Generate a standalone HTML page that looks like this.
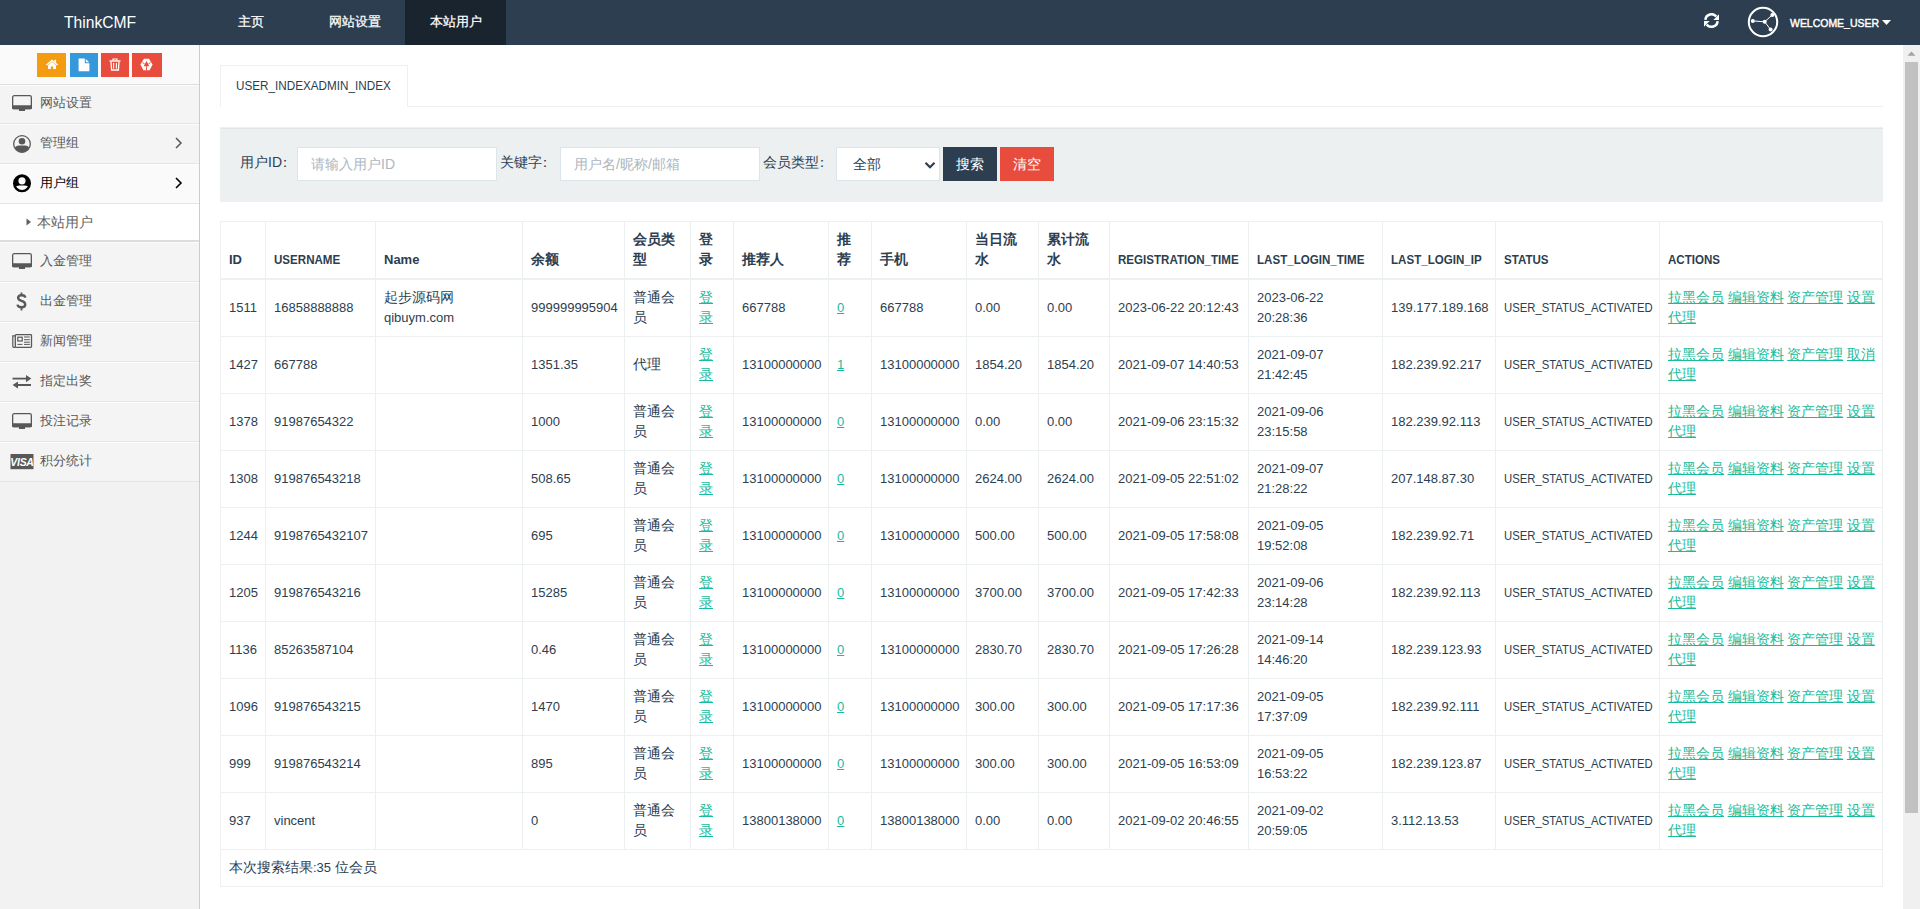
<!DOCTYPE html>
<html><head><meta charset="utf-8"><title>ThinkCMF</title>
<style>
html,body{margin:0;padding:0;width:1920px;height:909px;overflow:hidden;background:#fff;font-family:"Liberation Sans",sans-serif;}
*{box-sizing:border-box;}
.abs{position:absolute;}
svg.abs{z-index:5;}
#hdr{position:absolute;left:0;top:0;width:1920px;height:45px;background:#2c3e50;color:#fff;}
#brand{position:absolute;left:64px;top:14px;font-size:17px;line-height:18px;white-space:nowrap;}
.nv{position:absolute;top:-1px;height:46px;line-height:45px;font-size:13px;color:#fff;text-align:center;-webkit-text-stroke:0.25px #fff;}
.nv.on{background:#1a242f;}
#side{position:absolute;left:0;top:45px;width:200px;height:864px;background:#f2f2f2;border-right:1px solid #ccc;}
#sc{position:absolute;left:0;top:0;width:199px;height:40px;background:#fafafa;border-bottom:1px solid #ddd;}
.sb{position:absolute;top:8px;height:24px;}
.mi{position:absolute;left:0;width:199px;background:#f4f4f4;border-top:1px solid #fcfcfc;border-bottom:1px solid #e5e5e5;color:#585858;font-size:13px;}
.mi .t{position:absolute;left:40px;top:10px;line-height:16px;white-space:nowrap;}
.mi svg{position:absolute;}
#content{position:absolute;left:200px;top:45px;width:1703px;height:864px;background:#fff;}
#sbar{position:absolute;left:1903px;top:45px;width:17px;height:864px;background:#f0f0f0;}
#thumb{position:absolute;left:2px;top:17px;width:13px;height:751px;background:#c1c1c1;}
.cp{display:inline-block;transform-origin:0 50%;white-space:nowrap;}
#tab{position:absolute;left:20px;top:20px;width:188px;height:42px;border:1px solid #ecf0f1;border-bottom:none;background:#fff;font-size:13px;color:#2c3e50;}
#tabline{position:absolute;left:207px;top:61px;width:1476px;height:1px;background:#ecf0f1;}
#well{position:absolute;left:20px;top:82px;width:1663px;height:75px;background:#ecf0f1;}
#wellsh{position:absolute;left:1px;top:1px;right:0;height:1px;background:#e0e5e7;}
.lbl{position:absolute;top:26px;font-size:14px;line-height:18px;color:#2c3e50;white-space:nowrap;}
.inp{position:absolute;top:20px;height:34px;background:#fff;border:1px solid #dce4ec;font-size:14px;color:#acb6c0;line-height:32px;padding-left:13px;white-space:nowrap;}
.btn{position:absolute;top:20px;height:34px;width:54px;color:#fff;font-size:14px;line-height:34px;text-align:center;}
#tbl{position:absolute;left:20px;top:176px;border-collapse:separate;border-spacing:0;table-layout:fixed;width:1663px;border-left:1px solid #ecf0f1;border-top:1px solid #ecf0f1;color:#2c3e50;font-size:13px;}
#tbl th,#tbl td{border-right:1px solid #ecf0f1;border-bottom:1px solid #ecf0f1;padding:8px 8px;line-height:20px;text-align:left;vertical-align:middle;white-space:nowrap;overflow:hidden;}
#tbl th{vertical-align:bottom;font-weight:bold;border-bottom:2px solid #ecf0f1;height:56px;}
#tbl td{height:55px;}
#tbl td.ft{height:35px;}
#tbl .z{font-size:14px;line-height:16px;}
#tbl a{color:#18bc9c;text-decoration:underline;}
</style></head><body>
<div id="hdr">
  <div id="brand"><span class="cp" style="transform:scaleX(0.92)">ThinkCMF</span></div>
  <div class="nv" style="left:213px;width:76px;">主页</div>
  <div class="nv" style="left:305px;width:100px;">网站设置</div>
  <div class="nv on" style="left:405px;width:101px;">本站用户</div>
  <svg class="abs" style="left:1704px;top:13px" width="15" height="15" viewBox="0 0 15 15"><path d="M1.4 6.9 A6.1 6.1 0 0 1 12.3 3.6" fill="none" stroke="#fff" stroke-width="2.5"/><path d="M15 1.3 V6.9 H9.4Z" fill="#fff"/><path d="M13.6 8.1 A6.1 6.1 0 0 1 2.7 11.4" fill="none" stroke="#fff" stroke-width="2.5"/><path d="M0 13.7 V8.1 H5.6Z" fill="#fff"/></svg>
  <svg class="abs" style="left:1747px;top:6px" width="32" height="32" viewBox="0 0 32 32"><circle cx="16" cy="16" r="14.2" fill="none" stroke="#fff" stroke-width="2"/><path d="M5.8 14.9 L17.7 15.8 L25.3 8.9 M17.7 15.8 L23.6 23.6" stroke="#fff" stroke-width="1" fill="none"/><circle cx="5.8" cy="14.9" r="2" fill="#fff"/><circle cx="17.7" cy="15.8" r="2" fill="#fff"/><circle cx="25.3" cy="8.9" r="2" fill="#fff"/><circle cx="23.6" cy="23.6" r="2" fill="#fff"/></svg>
  <div class="abs" style="left:1790px;top:16px;font-size:11.5px;line-height:14px;white-space:nowrap;color:#fff;-webkit-text-stroke:0.45px #fff"><span class="cp" style="transform:scaleX(0.91)">WELCOME_USER</span></div>
  <svg class="abs" style="left:1882px;top:20px" width="9" height="5" viewBox="0 0 9 5"><path d="M0 0 H9 L4.5 5 Z" fill="#fff"/></svg>
</div>

<div id="side">
  <div id="sc">
    <div class="sb" style="left:37px;width:29px;background:#f39c12;"></div>
    <div class="sb" style="left:70px;width:28px;background:#3498db;"></div>
    <div class="sb" style="left:101px;width:28px;background:#e74c3c;"></div>
    <div class="sb" style="left:132px;width:30px;background:#e74c3c;"></div>
  </div>
  <div class="mi" style="top:40px;height:39px;"><span class="t" style="top:9px">网站设置</span></div>
  <div class="mi" style="top:79px;height:40px;"><span class="t">管理组</span></div>
  <div class="mi" style="top:119px;height:40px;background:#fafafa;color:#000;"><span class="t">用户组</span></div>
  <div class="abs" style="left:0;top:159px;width:199px;height:36px;background:#fff;"><span class="abs" style="left:37px;top:10px;font-size:14px;line-height:16px;color:#616161">本站用户</span></div>
  <div class="abs" style="left:0;top:195px;width:199px;height:2px;background:#ddd;"></div>
  <div class="mi" style="top:197px;height:40px;"><span class="t">入金管理</span></div>
  <div class="mi" style="top:237px;height:40px;"><span class="t">出金管理</span></div>
  <div class="mi" style="top:277px;height:40px;"><span class="t">新闻管理</span></div>
  <div class="mi" style="top:317px;height:40px;"><span class="t">指定出奖</span></div>
  <div class="mi" style="top:357px;height:40px;"><span class="t">投注记录</span></div>
  <div class="mi" style="top:397px;height:40px;"><span class="t">积分统计</span></div>
</div>

<svg class="abs" style="left:12px;top:95px" width="20" height="17" viewBox="0 0 20 17"><rect x="0.65" y="0.65" width="18.7" height="13" rx="1.6" fill="none" stroke="#585858" stroke-width="1.3"/><rect x="0" y="10.2" width="20" height="4" rx="1.2" fill="#585858"/><rect x="7" y="14" width="6" height="2" fill="#585858"/></svg>
<svg class="abs" style="left:13px;top:135px" width="18" height="18" viewBox="0 0 18 18"><defs><clipPath id="cc1"><circle cx="9" cy="9" r="8.4"/></clipPath></defs><circle cx="9" cy="9" r="8.3" fill="none" stroke="#585858" stroke-width="1.3"/><circle cx="9" cy="6.3" r="3.3" fill="#585858"/><path d="M1 18 V14.5 Q2 10.6 6.3 10.6 H11.7 Q16 10.6 17 14.5 V18Z" fill="#585858" clip-path="url(#cc1)"/></svg>
<svg class="abs" style="left:13px;top:174px" width="18" height="19" viewBox="0 0 18 19"><defs><clipPath id="cc2"><circle cx="9" cy="9.3" r="6.6"/></clipPath></defs><circle cx="9" cy="9.3" r="9" fill="#000"/><circle cx="9" cy="6.8" r="3.6" fill="#fafafa"/><path d="M1 19 V15.5 Q2 11.6 6.3 11.6 H11.7 Q16 11.6 17 15.5 V19Z" fill="#fafafa" clip-path="url(#cc2)"/></svg>
<svg class="abs" style="left:12px;top:253px" width="20" height="17" viewBox="0 0 20 17"><rect x="0.65" y="0.65" width="18.7" height="13" rx="1.6" fill="none" stroke="#585858" stroke-width="1.3"/><rect x="0" y="10.2" width="20" height="4" rx="1.2" fill="#585858"/><rect x="7" y="14" width="6" height="2" fill="#585858"/></svg>
<svg class="abs" style="left:16px;top:292px" width="11" height="19" viewBox="0 0 11 19"><path d="M9.3 5.6 Q9 3.3 5.5 3.3 Q2.1 3.3 2.1 5.8 Q2.1 7.8 5.5 8.8 Q9.2 9.8 9.2 12.4 Q9.2 15.2 5.5 15.2 Q1.9 15.2 1.5 12.6" fill="none" stroke="#585858" stroke-width="2.4"/><path d="M5.5 0.5 V3.5 M5.5 15 V18.5" stroke="#585858" stroke-width="1.8"/></svg>
<svg class="abs" style="left:11px;top:333px" width="22" height="16" viewBox="0 0 22 16"><rect x="4.3" y="1.7" width="16.2" height="12.6" rx="0.8" fill="none" stroke="#585858" stroke-width="1.3"/><path d="M4.3 2.8 H1.8 V13.6 Q1.8 14.3 2.6 14.3 H4.3" fill="none" stroke="#585858" stroke-width="1.2"/><rect x="6.8" y="4.2" width="4.4" height="3.8" fill="none" stroke="#585858" stroke-width="1.2"/><path d="M13 4 H18.8 M13 6.7 H18.8 M13 9.2 H18.8 M6.4 11.4 H11.4 M13 11.4 H18.8" stroke="#585858" stroke-width="1"/></svg>
<svg class="abs" style="left:12px;top:375px" width="20" height="14" viewBox="0 0 20 14"><path d="M0.5 3.6 H15" stroke="#585858" stroke-width="1.8"/><path d="M14 0 L19.3 3.6 L14 7.2Z" fill="#585858"/><path d="M5 10 H19" stroke="#585858" stroke-width="2"/><path d="M6 6.4 L0.6 10 L6 13.6Z" fill="#585858"/></svg>
<svg class="abs" style="left:12px;top:413px" width="20" height="17" viewBox="0 0 20 17"><rect x="0.65" y="0.65" width="18.7" height="13" rx="1.6" fill="none" stroke="#585858" stroke-width="1.3"/><rect x="0" y="10.2" width="20" height="4" rx="1.2" fill="#585858"/><rect x="7" y="14" width="6" height="2" fill="#585858"/></svg>
<svg class="abs" style="left:10px;top:454px" width="24" height="16" viewBox="0 0 24 16"><rect x="0.5" y="0" width="23" height="15.2" fill="#585858"/><text x="12" y="12.2" text-anchor="middle" font-family="Liberation Sans" font-weight="bold" font-style="italic" font-size="10.5" fill="#fff" letter-spacing="-0.3">VISA</text></svg>
<svg class="abs" style="left:175px;top:137px" width="8" height="12" viewBox="0 0 8 12"><path d="M1 1 L6 6 L1 11" fill="none" stroke="#585858" stroke-width="1.5"/></svg>
<svg class="abs" style="left:175px;top:177px" width="8" height="12" viewBox="0 0 8 12"><path d="M1 1 L6 6 L1 11" fill="none" stroke="#000" stroke-width="1.6"/></svg>
<svg class="abs" style="left:26px;top:218px" width="6" height="8" viewBox="0 0 6 8"><path d="M0.5 0.5 L5 4 L0.5 7.5Z" fill="#616161"/></svg>
<svg class="abs" style="left:46px;top:59px" width="12" height="11" viewBox="0 0 12 11"><path d="M0 5.6 L6 0.6 L12 5.6 L11 6.6 L6 2.4 L1 6.6Z" fill="#fff"/><path d="M2 6.2 L6 3 L10 6.2 V10 H7.2 V7.4 H4.8 V10 H2Z" fill="#fff"/><rect x="8.3" y="0.8" width="1.8" height="3" fill="#fff"/></svg>
<svg class="abs" style="left:78px;top:58px" width="12" height="14" viewBox="0 0 12 14"><path d="M0.6 0.6 H6.8 V5.2 H11.4 V13.2 H0.6Z" fill="#fff"/><path d="M7.8 0.9 L11.2 4.3 H7.8Z" fill="#fff"/></svg>
<svg class="abs" style="left:109px;top:58px" width="12" height="13" viewBox="0 0 12 13"><path d="M0.5 3 H11.5" stroke="#fff" stroke-width="1.4"/><path d="M4 2.6 V1 H8 V2.6" fill="none" stroke="#fff" stroke-width="1.2"/><path d="M2 3.5 L2.6 12 H9.4 L10 3.5" fill="none" stroke="#fff" stroke-width="1.3"/><path d="M4.6 5 V10.4 M7.4 5 V10.4" stroke="#fff" stroke-width="1.1"/></svg>
<svg class="abs" style="left:140px;top:58px" width="13" height="13" viewBox="0 0 13 13"><path d="M4 0.8 H9 L12.6 6.5 L9.6 12.2 H3.4 L0.4 6.5Z" fill="#fff"/><path d="M6.5 3 L9.3 8.2 H3.7Z" fill="#e74c3c"/><path d="M6.5 8.2 V12.4 M2.4 4.6 L4.6 5.8 M10.6 4.6 L8.4 5.8" stroke="#e74c3c" stroke-width="0.9"/></svg>
<svg class="abs" style="left:924px;top:161px" width="12" height="9" viewBox="0 0 12 9"><path d="M1.5 1.8 L6 6.3 L10.5 1.8" fill="none" stroke="#2c3e50" stroke-width="2.2"/></svg>
<div id="content">
  <div id="tab"><span class="abs" style="left:15px;top:12px;line-height:16px;"><span class="cp" style="transform:scaleX(0.9)">USER_INDEXADMIN_INDEX</span></span></div>
  <div id="tabline"></div>
  <div id="well"><div id="wellsh"></div>
    <span class="lbl" style="left:20px;">用户ID<span style="margin-left:-4px">：</span></span>
    <div class="inp" style="left:77px;width:200px;">请输入用户ID</div>
    <span class="lbl" style="left:280px;">关键字<span style="margin-left:-4px">：</span></span>
    <div class="inp" style="left:340px;width:200px;">用户名/昵称/邮箱</div>
    <span class="lbl" style="left:543px;">会员类型<span style="margin-left:-4px">：</span></span>
    <div class="inp" style="left:616px;width:104px;color:#2c3e50;padding-left:16px;">全部</div>
    <div class="btn" style="left:723px;background:#2c3e50;">搜索</div>
    <div class="btn" style="left:780px;background:#e74c3c;">清空</div>
  </div>
<table id="tbl"><colgroup><col style="width:45px"><col style="width:110px"><col style="width:147px"><col style="width:102px"><col style="width:66px"><col style="width:43px"><col style="width:95px"><col style="width:43px"><col style="width:95px"><col style="width:72px"><col style="width:71px"><col style="width:139px"><col style="width:134px"><col style="width:113px"><col style="width:164px"><col style="width:223px"></colgroup>
<tr class="hd"><th>ID</th><th><span class="cp" style="transform:scaleX(0.89)">USERNAME</span></th><th>Name</th><th><span class="z">余额</span></th><th><span class="z">会员类<br>型</span></th><th><span class="z">登<br>录</span></th><th><span class="z">推荐人</span></th><th><span class="z">推<br>荐</span></th><th><span class="z">手机</span></th><th><span class="z">当日流<br>水</span></th><th><span class="z">累计流<br>水</span></th><th><span class="cp" style="transform:scaleX(0.89)">REGISTRATION_TIME</span></th><th><span class="cp" style="transform:scaleX(0.89)">LAST_LOGIN_TIME</span></th><th><span class="cp" style="transform:scaleX(0.89)">LAST_LOGIN_IP</span></th><th><span class="cp" style="transform:scaleX(0.89)">STATUS</span></th><th><span class="cp" style="transform:scaleX(0.89)">ACTIONS</span></th></tr>
<tr><td>1511</td><td>16858888888</td><td><span class="z">起步源码网</span><br>qibuym.com</td><td>999999995904</td><td><span class="z">普通会<br>员</span></td><td><a class="z">登<br>录</a></td><td>667788</td><td><a>0</a></td><td>667788</td><td>0.00</td><td>0.00</td><td>2023-06-22 20:12:43</td><td>2023-06-22<br>20:28:36</td><td>139.177.189.168</td><td><span class="cp" style="transform:scaleX(0.87)">USER_STATUS_ACTIVATED</span></td><td><a class="z">拉黑会员</a> <a class="z">编辑资料</a> <a class="z">资产管理</a> <a class="z">设置</a><br><a class="z">代理</a></td></tr>
<tr><td>1427</td><td>667788</td><td></td><td>1351.35</td><td><span class="z">代理</span></td><td><a class="z">登<br>录</a></td><td>13100000000</td><td><a>1</a></td><td>13100000000</td><td>1854.20</td><td>1854.20</td><td>2021-09-07 14:40:53</td><td>2021-09-07<br>21:42:45</td><td>182.239.92.217</td><td><span class="cp" style="transform:scaleX(0.87)">USER_STATUS_ACTIVATED</span></td><td><a class="z">拉黑会员</a> <a class="z">编辑资料</a> <a class="z">资产管理</a> <a class="z">取消</a><br><a class="z">代理</a></td></tr>
<tr><td>1378</td><td>91987654322</td><td></td><td>1000</td><td><span class="z">普通会<br>员</span></td><td><a class="z">登<br>录</a></td><td>13100000000</td><td><a>0</a></td><td>13100000000</td><td>0.00</td><td>0.00</td><td>2021-09-06 23:15:32</td><td>2021-09-06<br>23:15:58</td><td>182.239.92.113</td><td><span class="cp" style="transform:scaleX(0.87)">USER_STATUS_ACTIVATED</span></td><td><a class="z">拉黑会员</a> <a class="z">编辑资料</a> <a class="z">资产管理</a> <a class="z">设置</a><br><a class="z">代理</a></td></tr>
<tr><td>1308</td><td>919876543218</td><td></td><td>508.65</td><td><span class="z">普通会<br>员</span></td><td><a class="z">登<br>录</a></td><td>13100000000</td><td><a>0</a></td><td>13100000000</td><td>2624.00</td><td>2624.00</td><td>2021-09-05 22:51:02</td><td>2021-09-07<br>21:28:22</td><td>207.148.87.30</td><td><span class="cp" style="transform:scaleX(0.87)">USER_STATUS_ACTIVATED</span></td><td><a class="z">拉黑会员</a> <a class="z">编辑资料</a> <a class="z">资产管理</a> <a class="z">设置</a><br><a class="z">代理</a></td></tr>
<tr><td>1244</td><td>9198765432107</td><td></td><td>695</td><td><span class="z">普通会<br>员</span></td><td><a class="z">登<br>录</a></td><td>13100000000</td><td><a>0</a></td><td>13100000000</td><td>500.00</td><td>500.00</td><td>2021-09-05 17:58:08</td><td>2021-09-05<br>19:52:08</td><td>182.239.92.71</td><td><span class="cp" style="transform:scaleX(0.87)">USER_STATUS_ACTIVATED</span></td><td><a class="z">拉黑会员</a> <a class="z">编辑资料</a> <a class="z">资产管理</a> <a class="z">设置</a><br><a class="z">代理</a></td></tr>
<tr><td>1205</td><td>919876543216</td><td></td><td>15285</td><td><span class="z">普通会<br>员</span></td><td><a class="z">登<br>录</a></td><td>13100000000</td><td><a>0</a></td><td>13100000000</td><td>3700.00</td><td>3700.00</td><td>2021-09-05 17:42:33</td><td>2021-09-06<br>23:14:28</td><td>182.239.92.113</td><td><span class="cp" style="transform:scaleX(0.87)">USER_STATUS_ACTIVATED</span></td><td><a class="z">拉黑会员</a> <a class="z">编辑资料</a> <a class="z">资产管理</a> <a class="z">设置</a><br><a class="z">代理</a></td></tr>
<tr><td>1136</td><td>85263587104</td><td></td><td>0.46</td><td><span class="z">普通会<br>员</span></td><td><a class="z">登<br>录</a></td><td>13100000000</td><td><a>0</a></td><td>13100000000</td><td>2830.70</td><td>2830.70</td><td>2021-09-05 17:26:28</td><td>2021-09-14<br>14:46:20</td><td>182.239.123.93</td><td><span class="cp" style="transform:scaleX(0.87)">USER_STATUS_ACTIVATED</span></td><td><a class="z">拉黑会员</a> <a class="z">编辑资料</a> <a class="z">资产管理</a> <a class="z">设置</a><br><a class="z">代理</a></td></tr>
<tr><td>1096</td><td>919876543215</td><td></td><td>1470</td><td><span class="z">普通会<br>员</span></td><td><a class="z">登<br>录</a></td><td>13100000000</td><td><a>0</a></td><td>13100000000</td><td>300.00</td><td>300.00</td><td>2021-09-05 17:17:36</td><td>2021-09-05<br>17:37:09</td><td>182.239.92.111</td><td><span class="cp" style="transform:scaleX(0.87)">USER_STATUS_ACTIVATED</span></td><td><a class="z">拉黑会员</a> <a class="z">编辑资料</a> <a class="z">资产管理</a> <a class="z">设置</a><br><a class="z">代理</a></td></tr>
<tr><td>999</td><td>919876543214</td><td></td><td>895</td><td><span class="z">普通会<br>员</span></td><td><a class="z">登<br>录</a></td><td>13100000000</td><td><a>0</a></td><td>13100000000</td><td>300.00</td><td>300.00</td><td>2021-09-05 16:53:09</td><td>2021-09-05<br>16:53:22</td><td>182.239.123.87</td><td><span class="cp" style="transform:scaleX(0.87)">USER_STATUS_ACTIVATED</span></td><td><a class="z">拉黑会员</a> <a class="z">编辑资料</a> <a class="z">资产管理</a> <a class="z">设置</a><br><a class="z">代理</a></td></tr>
<tr><td>937</td><td>vincent</td><td></td><td>0</td><td><span class="z">普通会<br>员</span></td><td><a class="z">登<br>录</a></td><td>13800138000</td><td><a>0</a></td><td>13800138000</td><td>0.00</td><td>0.00</td><td>2021-09-02 20:46:55</td><td>2021-09-02<br>20:59:05</td><td>3.112.13.53</td><td><span class="cp" style="transform:scaleX(0.87)">USER_STATUS_ACTIVATED</span></td><td><a class="z">拉黑会员</a> <a class="z">编辑资料</a> <a class="z">资产管理</a> <a class="z">设置</a><br><a class="z">代理</a></td></tr>
<tr><td colspan="16" class="ft"><span class="z">本次搜索结果</span>:35 <span class="z">位会员</span></td></tr></table>
</div>
<div id="sbar"><div id="thumb"></div><svg class="abs" style="left:4px;top:6px" width="9" height="5" viewBox="0 0 9 5"><path d="M0.5 4.7 L4.5 0.5 L8.5 4.7Z" fill="#a3a3a3"/></svg></div>
</body></html>
